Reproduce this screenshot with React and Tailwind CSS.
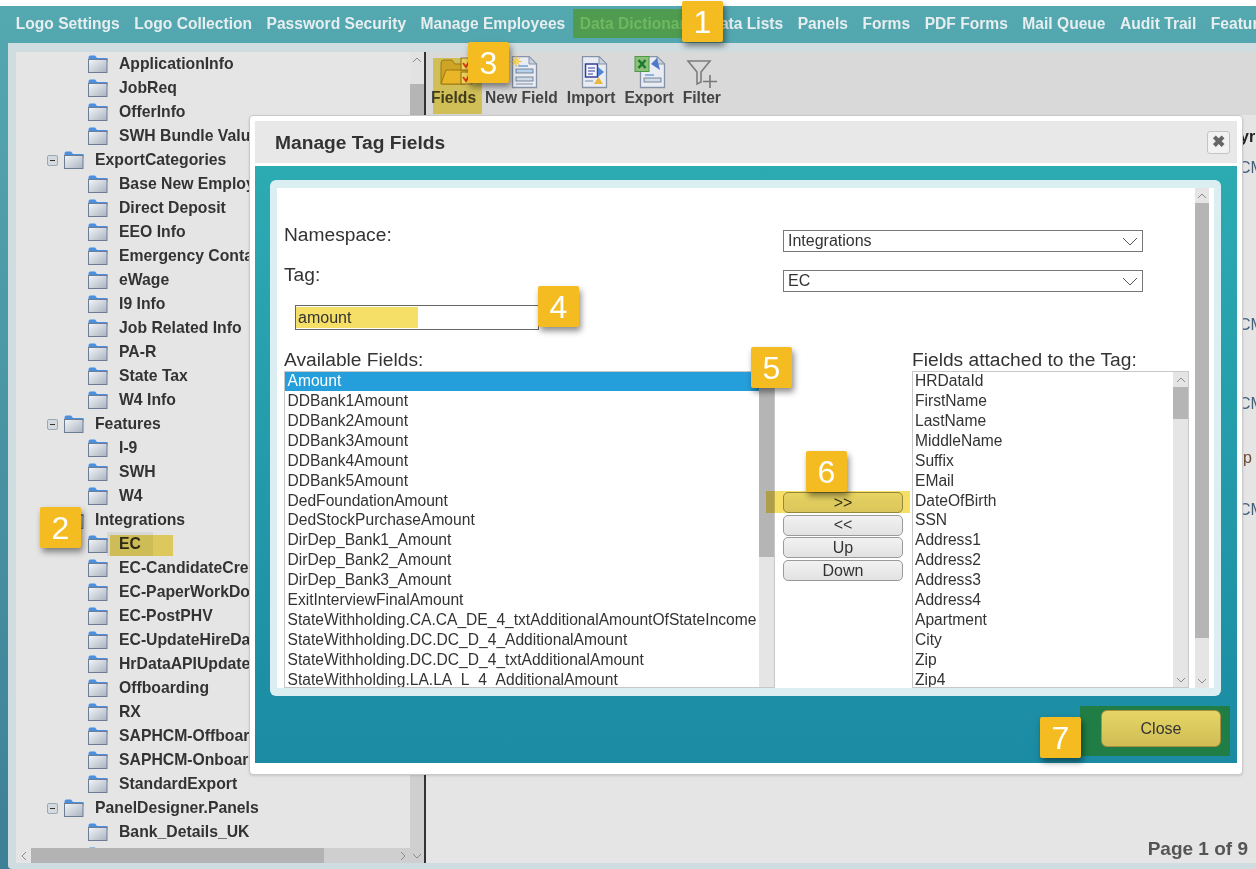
import React from 'react'

const navItems = ['Logo Settings', 'Logo Collection', 'Password Security', 'Manage Employees', 'Data Dictionary', 'Data Lists', 'Panels', 'Forms', 'PDF Forms', 'Mail Queue', 'Audit Trail', 'Features']

const treeRows = [
  ['ApplicationInfo', 1], ['JobReq', 1], ['OfferInfo', 1], ['SWH Bundle Values', 1],
  ['ExportCategories', 0], ['Base New Employee', 1], ['Direct Deposit', 1], ['EEO Info', 1],
  ['Emergency Contact', 1], ['eWage', 1], ['I9 Info', 1], ['Job Related Info', 1], ['PA-R', 1],
  ['State Tax', 1], ['W4 Info', 1], ['Features', 0], ['I-9', 1], ['SWH', 1], ['W4', 1],
  ['Integrations', 0], ['EC', 1], ['EC-CandidateCreate', 1], ['EC-PaperWorkDone', 1], ['EC-PostPHV', 1],
  ['EC-UpdateHireData', 1], ['HrDataAPIUpdate', 1], ['Offboarding', 1], ['RX', 1],
  ['SAPHCM-Offboarding', 1], ['SAPHCM-Onboarding', 1], ['StandardExport', 1],
  ['PanelDesigner.Panels', 0], ['Bank_Details_UK', 1], ['Benefits', 1],
]

const availableFields = ['Amount', 'DDBank1Amount', 'DDBank2Amount', 'DDBank3Amount', 'DDBank4Amount', 'DDBank5Amount', 'DedFoundationAmount', 'DedStockPurchaseAmount', 'DirDep_Bank1_Amount', 'DirDep_Bank2_Amount', 'DirDep_Bank3_Amount', 'ExitInterviewFinalAmount', 'StateWithholding.CA.CA_DE_4_txtAdditionalAmountOfStateIncome', 'StateWithholding.DC.DC_D_4_AdditionalAmount', 'StateWithholding.DC.DC_D_4_txtAdditionalAmount', 'StateWithholding.LA.LA_L_4_AdditionalAmount']

const attachedFields = ['HRDataId', 'FirstName', 'LastName', 'MiddleName', 'Suffix', 'EMail', 'DateOfBirth', 'SSN', 'Address1', 'Address2', 'Address3', 'Address4', 'Apartment', 'City', 'Zip', 'Zip4']

const Folder = () => (
  <svg width="20" height="18" viewBox="0 0 20 18" className="shrink-0">
    <defs>
      <linearGradient id="folderBody" x1="0" y1="0" x2="1" y2="1">
        <stop offset="0" stopColor="#f4f6f8" />
        <stop offset="1" stopColor="#a9b2c0" />
      </linearGradient>
    </defs>
    <path d="M0.5 2.5 Q0.5 0.5 2.5 0.5 H7 L9 3 H19.5 V6 H0.5 Z" fill="#4a90dc" />
    <rect x="0.5" y="4.5" width="18.5" height="13" fill="url(#folderBody)" stroke="#6d7b93" />
  </svg>
)

const Expander = () => (
  <span className="w-[11px] h-[11px] rounded-[2px] border border-[#9aa7b5] bg-[#d5dae0] flex items-center justify-center shrink-0">
    <span className="w-[5px] h-px bg-[#333]" />
  </span>
)

const TreeRow = ({ label, child }) => (
  <div className="h-[24px] flex items-center shrink-0 whitespace-nowrap">
    {child ? (
      <div className="flex items-center pl-[72px]">
        <Folder />
        <span className="ml-[11px] font-bold text-[15.75px] text-[#333]">{label}</span>
      </div>
    ) : (
      <div className="flex items-center pl-[31px]">
        <Expander />
        <span className="ml-[6px]"><Folder /></span>
        <span className="ml-[11px] font-bold text-[15.75px] text-[#333]">{label}</span>
      </div>
    )}
  </div>
)

const Badge = ({ n, className }) => (
  <div className={`absolute w-[41px] h-[41px] bg-[#f5bc22] rounded-[2px] shadow-[2px_4px_6px_rgba(0,0,0,0.45)] flex items-center justify-center text-white text-[32px] ${className}`}>
    {n}
  </div>
)

const Chevron = ({ up, className }) => (
  <svg width="10" height="6" viewBox="0 0 10 6" className={className}>
    <path d={up ? 'M1 5 L5 1 L9 5' : 'M1 1 L5 5 L9 1'} fill="none" stroke="#8a8a8a" strokeWidth="1" />
  </svg>
)

const SelectBox = ({ value }) => (
  <div className="h-[22px] w-[360px] border border-[#777] bg-white flex items-center justify-between px-[4px] text-[16px] text-[#333]">
    <span>{value}</span>
    <svg width="16" height="9" viewBox="0 0 16 9"><path d="M1 1 L8 8 L15 1" fill="none" stroke="#555" /></svg>
  </div>
)

const ListBox = ({ items, width, thumbHeight, selected, padding, showDown }) => (
  <div className={`h-[317px] border border-[#c8c8c8] bg-white flex overflow-hidden ${width}`}>
    <div className="flex-1 min-w-0 overflow-hidden">
      <div className="-mt-[1px]">
        {items.map((item, i) => (
          <div key={item} className={`h-[19.93px] leading-[19.93px] text-[15.6px] whitespace-nowrap overflow-hidden ${padding} ${selected === i ? 'bg-[#259fdc] text-white' : 'text-[#333]'}`}>
            {item}
          </div>
        ))}
      </div>
    </div>
    <div className="w-[15px] shrink-0 bg-[#e5e5e5] flex flex-col items-center">
      <div className="h-[15px] flex items-center"><Chevron up /></div>
      <div className={`w-full bg-[#b5b5b5] ${thumbHeight}`} />
      {showDown && <div className="mt-auto h-[15px] flex items-center"><Chevron /></div>}
    </div>
  </div>
)

const MoveButton = ({ label }) => (
  <div className="w-[120px] h-[21px] rounded-[5px] border border-[#9a9a9a] flex items-center justify-center text-[16px] text-[#333] bg-gradient-to-b from-[#f2f2f2] to-[#e2e2e2]">
    {label}
  </div>
)

const FieldsIcon = () => (
  <svg width="44" height="31" viewBox="0 0 44 31">
    <path d="M9 28 V7 Q9 4 12 4 H20 L23 8 H33 V28 Z" fill="#d8bc58" stroke="#a58a30" />
    <path d="M9 28 L14 14 H38 L33 28 Z" fill="#f2d060" stroke="#a58a30" />
    <rect x="29" y="2" width="11" height="12" fill="#f6f0dc" stroke="#8d7a4a" />
    <path d="M31 7 L34 11 L38 4" fill="none" stroke="#e0452f" strokeWidth="2" />
    <rect x="29" y="16" width="11" height="12" fill="#f6f0dc" stroke="#8d7a4a" />
    <path d="M31 21 L34 25 L38 18" fill="none" stroke="#e0452f" strokeWidth="2" />
  </svg>
)

const DocBase = ({ children }) => (
  <svg width="34" height="33" viewBox="0 0 34 33">
    <path d="M8.5 0.5 H25 L32.5 8 V31.5 H8.5 Z" fill="#e9edf3" stroke="#8592a8" strokeWidth="1.3" />
    <path d="M25 0.5 V8 H32.5 Z" fill="#c9d1de" stroke="#8592a8" />
    {children}
  </svg>
)

const NewFieldIcon = () => (
  <DocBase>
    <path d="M14 10 H24" stroke="#6aa0d8" strokeWidth="1.5" />
    <rect x="12" y="13" width="17" height="4" fill="#b9d2ea" stroke="#5f6f86" strokeWidth="0.8" />
    <rect x="12" y="21" width="17" height="4" fill="#cfdbe8" stroke="#5f6f86" strokeWidth="0.8" />
    <path d="M12 28 H29" stroke="#7d8aa0" strokeWidth="1" />
    <path d="M12 0 V11 M6.5 5.5 H17.5 M8 1.5 L16 9.5 M16 1.5 L8 9.5" stroke="#e9b640" strokeWidth="1" />
    <circle cx="12" cy="5.5" r="3" fill="#f7d65a" />
  </DocBase>
)

const ImportIcon = () => (
  <DocBase>
    <rect x="11.5" y="8" width="12" height="13" fill="#f5f5fb" stroke="#33409a" strokeWidth="1.5" />
    <path d="M14 12 H21 M14 15 H21 M14 18 H19" stroke="#33409a" />
    <path d="M24 11 L30 16 L24 21 Z" fill="#4f86d8" />
    <path d="M20 28 L24.5 21 L29 28 Z" fill="#e8b93a" />
    <path d="M11 25 H19" stroke="#7d8aa0" />
  </DocBase>
)

const ExportIcon = () => (
  <DocBase>
    <rect x="3" y="0.5" width="14" height="15" fill="#8dc07a" stroke="#4a9a48" />
    <path d="M6.5 4 L13.5 12 M13.5 4 L6.5 12" stroke="#1f7a30" strokeWidth="2.6" />
    <path d="M19 8 L25 2 L28 14 Z" fill="#4f78c8" />
    <path d="M13 19 H22" stroke="#6aa0d8" strokeWidth="1.5" />
    <rect x="12" y="22" width="17" height="4" fill="#cfdbe8" stroke="#5f6f86" strokeWidth="0.8" />
  </DocBase>
)

const FilterIcon = () => (
  <svg width="34" height="33" viewBox="0 0 34 33">
    <path d="M3 5 H25 L16 16 V26 L12 28 V16 Z" fill="none" stroke="#7c7c7c" strokeWidth="1.6" />
    <path d="M25 19 V32 M18 25.5 H32" stroke="#777" strokeWidth="1.6" />
  </svg>
)

const toolbarItems = [
  ['Fields', <FieldsIcon key="fields" />],
  ['New Field', <NewFieldIcon key="new" />],
  ['Import', <ImportIcon key="import" />],
  ['Export', <ExportIcon key="export" />],
  ['Filter', <FilterIcon key="filter" />],
]

const TagDialog = () => (
  <div className="absolute left-[249px] top-[115px] w-[994px] h-[660px] bg-white border border-[#c9c9c9] rounded-[4px] p-[5px] shadow-sm">
    <div className="h-[42px] bg-[#e8e8e8] flex items-center justify-between pl-[20px] pr-[7px]">
      <span className="pt-[2px] font-bold text-[19.2px] text-[#333]">Manage Tag Fields</span>
      <div className="w-[23px] h-[23px] rounded-[3px] border border-[#c4c4c4] bg-[#f2f2f2] flex items-center justify-center text-[16px] font-bold text-[#666]">✖</div>
    </div>
    <div className="mt-[3px] h-[597px] bg-gradient-to-b from-[#2cabb2] to-[#1b8ba3] pl-[15px] pr-[16px] pt-[14px]">
      <div className="h-[516px] bg-[#dbeff2] rounded-[6px] pt-[8px] pb-[8px] pl-[7px] pr-[7px] flex">
        <div className="flex-1 min-w-0 bg-white pl-[7px] pt-[42px] overflow-hidden">
          <div className="grid grid-cols-[499px_360px] text-[19.2px] text-[#333] leading-[22px]">
            <div className="-mt-[6px]">Namespace:</div>
            <SelectBox value="Integrations" />
          </div>
          <div className="grid grid-cols-[499px_360px] text-[19.2px] text-[#333] leading-[22px] mt-[18px]">
            <div className="-mt-[6px]">Tag:</div>
            <SelectBox value="EC" />
          </div>
          <div className="mt-[13px] ml-[11px] w-[244px] h-[25px] border border-[#666] flex items-center">
            <div className="w-[122px] h-[21px] bg-[#f5df66] pl-[2px] text-[16px] leading-[21px] text-[#333]">amount</div>
          </div>
          <div className="flex mt-[20px]">
            <div>
              <div className="h-[21px] text-[19.2px] leading-[19px] text-[#333]">Available Fields:</div>
              <ListBox items={availableFields} width="w-[491px]" thumbHeight="h-[170px]" selected={0} padding="pl-[2.5px]" />
            </div>
            <div className="w-[137px] pl-[8px] pt-[142px] flex flex-col gap-[1.7px]">
              <MoveButton label=">>" />
              <MoveButton label="<<" />
              <MoveButton label="Up" />
              <MoveButton label="Down" />
            </div>
            <div>
              <div className="h-[21px] text-[19.2px] leading-[19px] text-[#333] whitespace-nowrap">Fields attached to the Tag:</div>
              <ListBox items={attachedFields} width="w-[277px]" thumbHeight="h-[32px]" padding="pl-[2px]" showDown />
            </div>
          </div>
        </div>
        <div className="w-[19px] shrink-0 bg-white pr-[5px]">
          <div className="h-full bg-[#e5e5e5] flex flex-col items-center">
            <div className="h-[15px] flex items-center"><Chevron up /></div>
            <div className="w-full h-[435px] bg-[#b5b5b5]" />
            <div className="mt-auto h-[15px] flex items-center"><Chevron /></div>
          </div>
        </div>
      </div>
      <div className="flex justify-end mt-[10px] -mr-[9px]">
        <div className="w-[150px] h-[50px] bg-[#1f7d45] pl-[21px] pt-[4px]">
          <div className="w-[120px] h-[37px] rounded-[6px] border border-[#a89040] bg-gradient-to-b from-[#e6d666] to-[#cfbd55] flex items-center justify-center text-[16px] text-[#333]">Close</div>
        </div>
      </div>
    </div>
  </div>
)

const App = () => {
  return (
    <div className="relative w-[1256px] h-[869px] overflow-hidden bg-white font-['Liberation_Sans',Arial,sans-serif]">
      <div className="h-[6px]" />
      <div className="h-[863px] bg-gradient-to-b from-[#54a8b0] to-[#3e8097] flex flex-col">
        {/* top menu */}
        <div className="h-[37px] shrink-0 flex pl-[8.5px] pt-[3px] overflow-hidden whitespace-nowrap">
          {navItems.map(item => (
            <div key={item} className={`h-[29px] px-[7.25px] flex items-center font-bold text-[15.6px] ${item === 'Data Dictionary' ? 'bg-[#4f9b50] text-[#6fb860]' : 'text-[#e6eeef]'}`}>
              {item}
            </div>
          ))}
        </div>
        {/* page body */}
        <div className="flex-1 min-h-0 ml-[8px] bg-[#cfdde1] rounded-bl-[4px] pl-[8px] pt-[9px] pb-[6px] flex">
          {/* tree */}
          <div className="w-[394px] h-[811px] shrink-0 flex flex-col bg-[#e5e5e5]">
            <div className="h-[796px] overflow-hidden flex flex-col">
              {treeRows.map(([label, child]) => <TreeRow key={label} label={label} child={child === 1} />)}
            </div>
            <div className="h-[15px] shrink-0 flex items-center bg-[#cfcfcf]">
              <div className="w-[15px] h-full bg-[#e5e5e5] flex items-center justify-center"><Chevron up className="-rotate-90" /></div>
              <div className="w-[293px] h-full bg-[#b3b3b3]" />
              <div className="ml-auto w-[15px] h-full flex items-center justify-center"><Chevron className="-rotate-90" /></div>
            </div>
          </div>
          <div className="w-[14px] h-[811px] shrink-0 bg-[#cfcfcf] flex flex-col items-center">
            <div className="w-full h-[32px] bg-[#e2e2e2] flex justify-center pt-[5px]"><Chevron up /></div>
            <div className="w-full h-[300px] bg-[#b5b5b5]" />
            <div className="mt-auto h-[15px] flex items-center"><Chevron /></div>
          </div>
          <div className="w-[2px] h-[811px] shrink-0 bg-[#333]" />
          {/* right pane */}
          <div className="flex-1 min-w-0 h-[811px] bg-[#e5e5e5] flex flex-col">
            <div className="h-[63px] shrink-0 bg-[#d9d9d9] flex gap-[9px] pl-[5px] pt-[4px]">
              {toolbarItems.map(([label, icon]) => (
                <div key={label} className="flex flex-col items-center">
                  <div className="h-[32px] flex items-start justify-center">{icon}</div>
                  <span className="font-bold text-[15.6px] leading-[20px] text-[#444] whitespace-nowrap">{label}</span>
                </div>
              ))}
            </div>
            <div className="flex-1 flex flex-col items-end min-h-0">
              <div className="w-[13px] overflow-hidden whitespace-nowrap text-[16px] leading-[18px]">
                <div className="mt-[13px] -ml-[3px] font-bold text-[#222]">yr</div>
                <div className="mt-[13px] -ml-[4px] text-[#46607a]">CM</div>
                <div className="mt-[139px] -ml-[4px] text-[#46607a]">CM</div>
                <div className="mt-[61px] -ml-[4px] text-[#46607a]">CM</div>
                <div className="mt-[36px] text-[#6b4a3a]">p</div>
                <div className="mt-[34px] -ml-[4px] text-[#46607a]">CM</div>
              </div>
              <div className="mt-auto pr-[8px] font-bold text-[19px] text-[#555]">Page 1 of 9</div>
            </div>
          </div>
        </div>
      </div>

      <TagDialog />

      {/* annotation highlights */}
      <div className="absolute left-[433px] top-[58px] w-[49px] h-[56px] bg-[#f5df66] mix-blend-multiply" />
      <div className="absolute left-[107px] top-[532px] w-[46px] h-[24px] bg-[#f0f0f0] mix-blend-multiply" />
      <div className="absolute left-[110px] top-[535px] w-[63px] h-[21px] bg-[#f5df66] mix-blend-multiply" />
      <div className="absolute left-[766px] top-[491px] w-[144px] h-[22px] bg-[#f5df66] mix-blend-multiply" />
      <Badge n="1" className="left-[682px] top-[1px]" />
      <Badge n="2" className="left-[40px] top-[507px]" />
      <Badge n="3" className="left-[468px] top-[42px]" />
      <Badge n="4" className="left-[538px] top-[286px]" />
      <Badge n="5" className="left-[751px] top-[347px]" />
      <Badge n="6" className="left-[806px] top-[451px]" />
      <Badge n="7" className="left-[1040px] top-[717px]" />
    </div>
  )
}

export default App
